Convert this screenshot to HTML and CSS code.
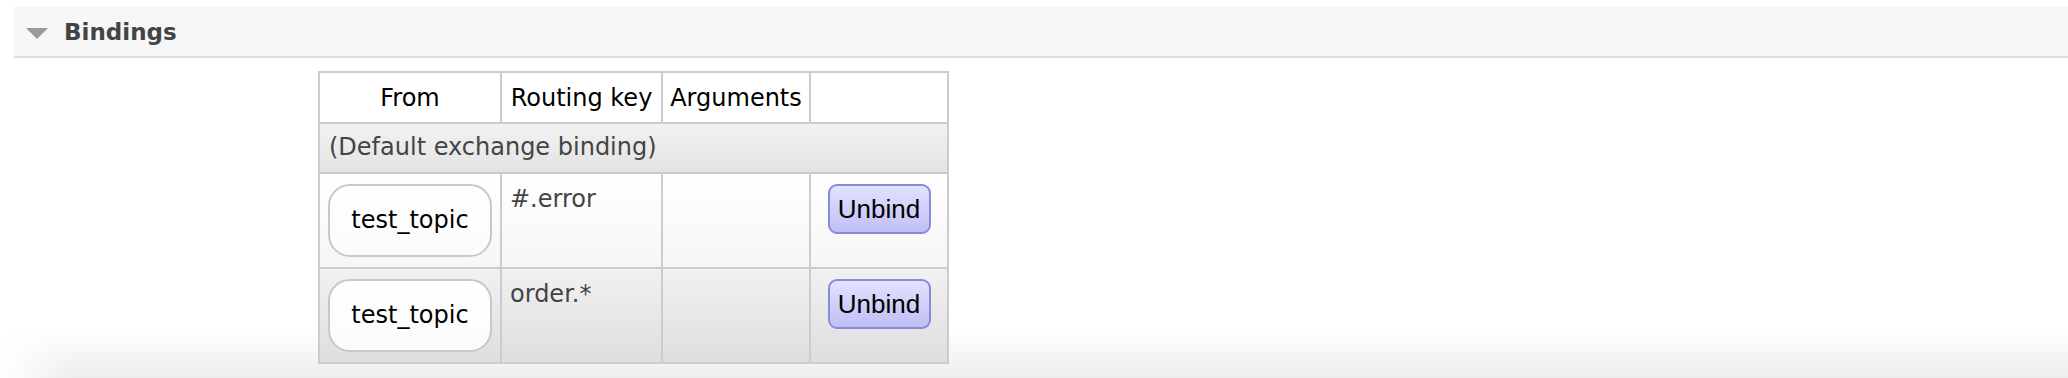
FILE: index.html
```html
<!DOCTYPE html>
<html>
<head>
<meta charset="utf-8">
<title>Bindings</title>
<link rel="stylesheet" href="styles.css">
</head>
<body>
<div class="section">
  <h2 class="section-title"><span class="toggle"></span><span>Bindings</span></h2>
  <div class="hider">
    <table class="list">
      <thead>
        <tr>
          <th class="c-from">From</th>
          <th class="c-key">Routing key</th>
          <th class="c-args">Arguments</th>
          <th class="c-act"></th>
        </tr>
      </thead>
      <tbody>
        <tr class="alt1 default-row">
          <td colspan="4">(Default exchange binding)</td>
        </tr>
        <tr class="alt2">
          <td class="pill-cell"><span class="pill">test_topic</span></td>
          <td class="key">#.error</td>
          <td></td>
          <td class="act"><button class="btn">Unbind</button></td>
        </tr>
        <tr class="alt1">
          <td class="pill-cell"><span class="pill">test_topic</span></td>
          <td class="key">order.*</td>
          <td></td>
          <td class="act"><button class="btn">Unbind</button></td>
        </tr>
      </tbody>
    </table>
  </div>
</div>
</body>
</html>
```

FILE: styles.css
```css
html, body {
  margin: 0;
  padding: 0;
  background: #fff;
  overflow: hidden;
  font-family: "DejaVu Sans", Verdana, sans-serif;
  font-size: 24px;
  color: #000;
}

.section {
  padding-top: 7px;
}

.section-title {
  margin: 0 0 0 14px;
  height: 49px;
  display: flex;
  align-items: center;
  gap: 16px;
  padding-left: 12px;
  background: #f7f7f7;
  border-bottom: 2px solid #dddddd;
  font-size: 23px;
  font-weight: bold;
  color: #444;
}

.toggle {
  width: 0;
  height: 0;
  border-left: 11px solid transparent;
  border-right: 11px solid transparent;
  border-top: 11px solid #9a9a9a;
  margin-top: 3px;
}

.hider {
  padding: 13px 0 14px 318px;
  background:
    linear-gradient(to right, #ffffff 0, rgba(255, 255, 255, 0) 70px),
    linear-gradient(to bottom, rgba(0, 0, 0, 0) calc(100% - 52px), rgba(0, 0, 0, 0.065) 100%);
}

table.list {
  border-collapse: separate;
  border-spacing: 0;
  table-layout: fixed;
  width: 631px;
  border-left: 2px solid #cccccc;
  border-top: 2px solid #cccccc;
}

table.list th,
table.list td {
  box-sizing: border-box;
  border-right: 2px solid #cccccc;
  border-bottom: 2px solid #cccccc;
  padding: 0;
}

table.list th {
  height: 51px;
  font-weight: normal;
  text-align: center;
  vertical-align: middle;
  background: #fff;
  color: #000;
}

table.list .c-from { width: 182px; }
table.list .c-key { width: 161px; }
table.list .c-args { width: 148px; }
table.list .c-act { width: 138px; }

table.list tr.alt1 td {
  background: linear-gradient(to bottom, #f1f1f1, #dedede);
}

table.list tr.alt2 td {
  background: linear-gradient(to bottom, #ffffff, #f6f6f6);
}

table.list tr.default-row td {
  height: 50px;
  padding: 0 0 2px 9px;
  color: #444;
  vertical-align: middle;
  background: linear-gradient(to bottom, #f2f2f2, #e3e3e3);
}

table.list td.pill-cell {
  padding: 10px 8px;
  vertical-align: top;
}

.pill {
  display: block;
  height: 69px;
  line-height: 69px;
  text-align: center;
  border: 2px solid #c8c8c8;
  border-radius: 22px;
  background: linear-gradient(to bottom, #ffffff, #fbfbfb);
  color: #000;
}

table.list td.key {
  vertical-align: top;
  padding: 11px 8px;
  color: #444;
}

table.list td.act {
  vertical-align: top;
  text-align: center;
  padding-top: 10px;
}

.btn {
  width: 103px;
  height: 50px;
  padding: 0;
  border: 2px solid #8a8ada;
  border-radius: 9px;
  background: linear-gradient(to bottom, #e2e2ff, #bfbff6);
  font-family: "Liberation Sans", Arial, sans-serif;
  font-size: 26px;
  color: #000;
}
```
